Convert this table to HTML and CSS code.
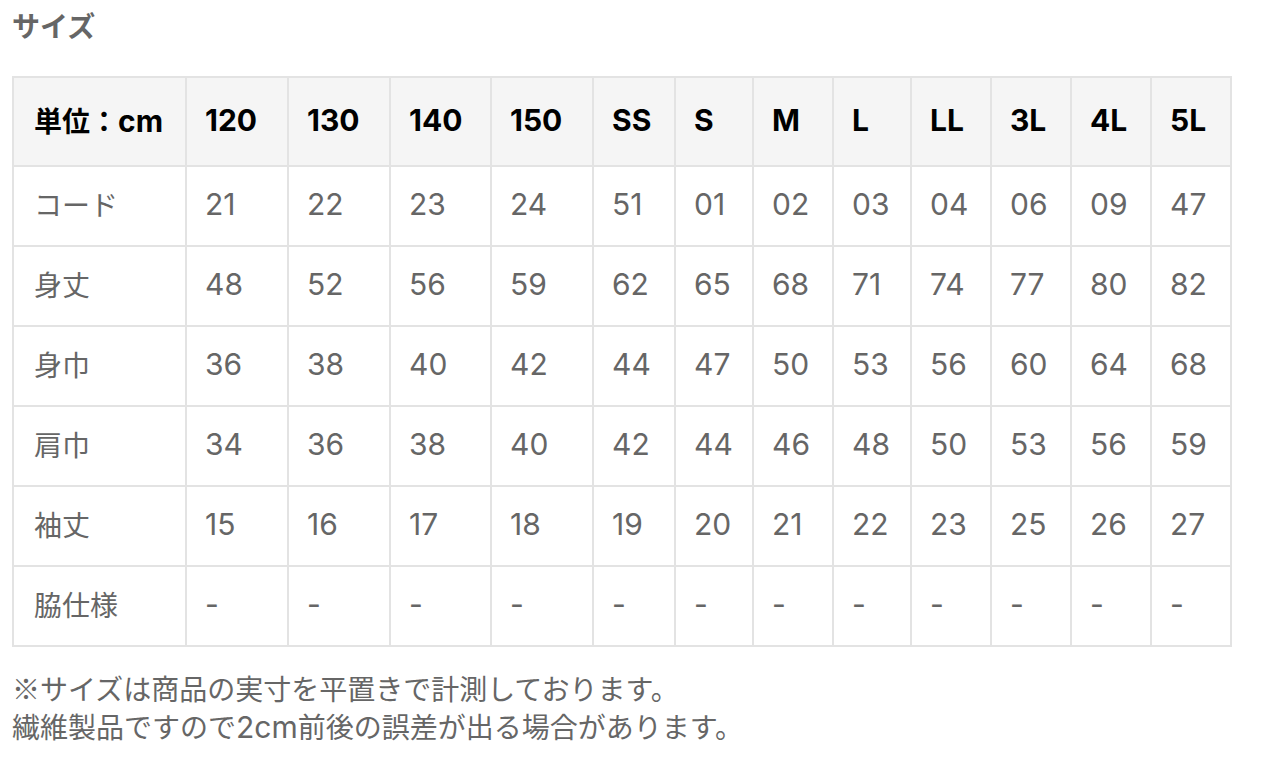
FILE: index.html
```html
<!DOCTYPE html>
<html lang="ja">
<head>
<meta charset="utf-8">
<link rel="stylesheet" href="styles.css">
</head>
<body>
<h2 class="title">サイズ</h2>
<table class="size-table">
  <colgroup>
    <col class="c-label"><col class="c-w102"><col class="c-w102"><col class="c-w101"><col class="c-w102">
    <col class="c-w82"><col class="c-w78"><col class="c-w80"><col class="c-w78"><col class="c-w80"><col class="c-w80"><col class="c-w80"><col class="c-w80">
  </colgroup>
  <thead>
    <tr><th>単位：<span class="lat">cm</span></th><th>120</th><th>130</th><th>140</th><th>150</th><th>SS</th><th>S</th><th>M</th><th>L</th><th>LL</th><th>3L</th><th>4L</th><th>5L</th></tr>
  </thead>
  <tbody>
    <tr><td>コード</td><td>21</td><td>22</td><td>23</td><td>24</td><td>51</td><td>01</td><td>02</td><td>03</td><td>04</td><td>06</td><td>09</td><td>47</td></tr>
    <tr><td>身丈</td><td>48</td><td>52</td><td>56</td><td>59</td><td>62</td><td>65</td><td>68</td><td>71</td><td>74</td><td>77</td><td>80</td><td>82</td></tr>
    <tr><td>身巾</td><td>36</td><td>38</td><td>40</td><td>42</td><td>44</td><td>47</td><td>50</td><td>53</td><td>56</td><td>60</td><td>64</td><td>68</td></tr>
    <tr><td>肩巾</td><td>34</td><td>36</td><td>38</td><td>40</td><td>42</td><td>44</td><td>46</td><td>48</td><td>50</td><td>53</td><td>56</td><td>59</td></tr>
    <tr><td>袖丈</td><td>15</td><td>16</td><td>17</td><td>18</td><td>19</td><td>20</td><td>21</td><td>22</td><td>23</td><td>25</td><td>26</td><td>27</td></tr>
    <tr><td>脇仕様</td><td>-</td><td>-</td><td>-</td><td>-</td><td>-</td><td>-</td><td>-</td><td>-</td><td>-</td><td>-</td><td>-</td><td>-</td></tr>
  </tbody>
</table>
<p class="note">※サイズは商品の実寸を平置きで計測しております。<br>繊維製品ですので<span class="lat">2cm</span>前後の誤差が出る場合があります。</p>
</body>
</html>
```

FILE: styles.css
```css
html, body {
  margin: 0;
  padding: 0;
  background: #fff;
}
body {
  padding: 6px 12px 0 12px;
  font-family: "Noto Sans CJK JP", "Noto Sans", sans-serif;
  font-size: 28px;
  color: #666;
}
.lat {
  font-family: Inter, "Noto Sans", sans-serif;
  font-size: 30px;
  line-height: 1;
}
.title {
  margin: 0;
  font-size: 28px;
  line-height: 38px;
  font-weight: 700;
  color: #666;
}
.size-table {
  margin-top: 32px;
  border-collapse: collapse;
  table-layout: fixed;
  width: 1218px;
}
.c-label { width: 173px; }
.c-w102 { width: 102px; }
.c-w101 { width: 101px; }
.c-w82 { width: 82px; }
.c-w80 { width: 80px; }
.c-w78 { width: 78px; }
.size-table th,
.size-table td {
  border: 2px solid #e3e3e3;
  padding: 0 0 4px 20px;
  text-align: left;
  white-space: nowrap;
  line-height: 38px;
}
.size-table th:not(:first-child),
.size-table td:not(:first-child) {
  font-family: Inter, "Noto Sans", sans-serif;
  font-size: 30px;
  padding-left: 18px;
}
.size-table thead tr { height: 89px; }
.size-table tbody tr { height: 80px; }
.size-table th {
  background: #f5f5f5;
  color: #000;
  font-weight: 700;
}
.size-table td {
  color: #666;
  font-weight: 400;
}
.note {
  margin: 22px 0 0 0;
  line-height: 38px;
  color: #666;
}
```
